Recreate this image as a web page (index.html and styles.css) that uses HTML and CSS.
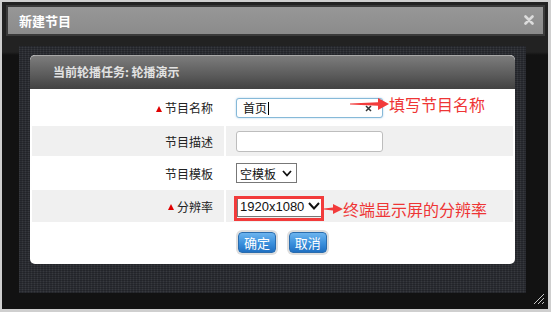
FILE: index.html
```html
<!DOCTYPE html>
<html lang="zh-CN">
<head>
    <meta charset="UTF-8">
    <title>新建节目</title>
    <link rel="stylesheet" href="styles.css">
</head>
<body>

    <div class="dialog">
        <!-- Title bar -->
        <div class="dialog-title">
            <span>新建节目</span>
            <svg class="dialog-close" width="10" height="10" viewBox="0 0 10 10">
                <path d="M1.5 1.5 L8.5 8.5 M8.5 1.5 L1.5 8.5" stroke="#dcdcdc" stroke-width="2.6" stroke-linecap="round"/>
            </svg>
        </div>

        <div class="dialog-body">
            <div class="panel">
                <div class="card">
                    <div class="card-head">当前轮播任务: 轮播演示</div>
                    <table class="form-table">
                        <tr>
                            <th><i class="req"></i>节目名称</th>
                            <td>
                                <span class="field focus">
                                    <input type="text" value="首页">
                                    <i class="caret"></i>
                                    <svg class="clear" width="7" height="7" viewBox="0 0 7 7"><path d="M1 1 L6 6 M6 1 L1 6" stroke="#333" stroke-width="1.5"/></svg>
                                </span>
                                <span class="note note-name">
                                    <svg width="39" height="14" viewBox="0 0 39 14"><polygon points="0,6.4 28,5.2 28,1 39,7 28,13 28,8.8 0,7.6" fill="#f23b3b"/></svg>
                                    填写节目名称
                                </span>
                            </td>
                        </tr>
                        <tr class="alt">
                            <th>节目描述</th>
                            <td><span class="field plain"><input type="text" value=""></span></td>
                        </tr>
                        <tr>
                            <th>节目模板</th>
                            <td>
                                <span class="select select-tpl">
                                    <span>空模板</span>
                                    <svg width="10" height="7" viewBox="0 0 10 7"><path d="M1 1 L5 5.5 L9 1" fill="none" stroke="#111" stroke-width="1.8"/></svg>
                                </span>
                            </td>
                        </tr>
                        <tr class="alt">
                            <th><i class="req"></i>分辨率</th>
                            <td>
                                <span class="select select-res">
                                    <span>1920x1080</span>
                                    <svg width="12" height="8" viewBox="0 0 12 8"><path d="M1 1 L6 6.5 L11 1" fill="none" stroke="#111" stroke-width="2"/></svg>
                                </span>
                                <span class="mark-box"></span>
                                <span class="note note-res">
                                    <svg width="19" height="14" viewBox="0 0 19 14"><polygon points="0,6.4 9,5.4 9,2 19,7 9,12 9,8.6 0,7.6" fill="#f23b3b"/></svg>
                                    终端显示屏的分辨率
                                </span>
                            </td>
                        </tr>
                        <tr>
                            <th></th>
                            <td class="actions">
                                <button class="btn">确定</button>
                                <button class="btn">取消</button>
                            </td>
                        </tr>
                    </table>
                </div>
            </div>
        </div>

        <svg class="resize" width="12" height="12" viewBox="0 0 12 12">
            <path d="M11 1 L1 11 M11 5 L5 11 M11 9 L9 11" stroke="#c8c8c8" stroke-width="1"/>
        </svg>
    </div>

</body>
</html>
```

FILE: styles.css
```css
* {
    box-sizing: border-box;
}

body {
    margin: 0;
    background: #cfcfcf;
    font-family: "Noto Sans CJK SC", "Microsoft YaHei", sans-serif;
    font-size: 12px;
    color: #222;
}

.dialog {
    position: relative;
    margin: 2px 3px 0 2px;
    height: 307px;
    padding-top: 3px;
    background: linear-gradient(#222 0, #222 50px, #121212 53px, #121212 100%);
}

.dialog-title {
    display: flex;
    justify-content: space-between;
    align-items: center;
    height: 31px;
    margin: 0 3px 0 4px;
    padding: 0 9px 1px 11px;
    border: 2px solid #3a3a3a;
    background: linear-gradient(#979797, #8b8b8b);
    color: #fff;
    font-size: 13px;
    font-weight: bold;
}

.dialog-close {
    display: block;
}

.dialog-body {
    padding: 10px 22px 0 17px;
}

.panel {
    height: 247px;
    padding: 9px 11px 0;
    background-color: #2c2e34;
    background-image:
        repeating-linear-gradient(0deg, rgba(0, 0, 0, 0.22) 0 1px, transparent 1px 2px),
        repeating-linear-gradient(90deg, rgba(255, 255, 255, 0.05) 0 1px, transparent 1px 3px);
}

.card {
    background: #fff;
    border-radius: 5px;
    overflow: hidden;
    padding-bottom: 2px;
}

.card-head {
    height: 34px;
    line-height: 32px;
    padding-left: 23px;
    border-top: 1px solid #a8a8a8;
    border-radius: 5px 5px 0 0;
    background: linear-gradient(#7c7c7c, #5a5a5a 60%, #424242);
    color: #e2e2e2;
    font-weight: bold;
}

.form-table {
    width: 100%;
    table-layout: fixed;
    border-collapse: separate;
    border-spacing: 2px;
}

.form-table th {
    width: 192px;
    padding: 0 11px 0 0;
    text-align: right;
    font-weight: normal;
    color: #222;
}

.form-table td {
    position: relative;
    padding: 0 0 0 10px;
}

.form-table tr:nth-child(1) { height: 33px; }
.form-table tr:nth-child(2) { height: 30px; }
.form-table tr:nth-child(3) { height: 30px; }
.form-table tr:nth-child(4) { height: 32px; }
.form-table tr:nth-child(5) { height: 36px; }

.form-table tr.alt th,
.form-table tr.alt td {
    background: #f0f0f0;
}

.req {
    display: inline-block;
    width: 0;
    height: 0;
    margin: 0 3px 2px 0;
    border-left: 3px solid transparent;
    border-right: 3px solid transparent;
    border-bottom: 6px solid #e00000;
    vertical-align: middle;
}

.field {
    position: relative;
    display: inline-block;
    width: 147px;
    height: 21px;
    border: 1px solid #bdbdbd;
    border-radius: 3px;
    background: #fff;
    vertical-align: middle;
}

.field.focus {
    height: 20px;
    border-color: #86b9d8;
    box-shadow: 0 0 2px rgba(110, 170, 215, 0.6);
}

.field input {
    width: 100%;
    height: 100%;
    padding: 0 6px;
    border: none;
    outline: none;
    background: transparent;
    font-family: inherit;
    font-size: 12px;
    color: #111;
}

.caret {
    position: absolute;
    left: 31px;
    top: 3px;
    width: 1px;
    height: 13px;
    background: #000;
}

.clear {
    position: absolute;
    right: 10px;
    top: 6px;
}

.select {
    display: inline-flex;
    align-items: center;
    height: 20px;
    border: 1px solid #777;
    background: #fff;
    vertical-align: middle;
    white-space: nowrap;
    color: #111;
}

.select svg {
    flex: none;
}

.select-tpl {
    padding: 0 4px 0 3px;
    gap: 6px;
}

.select-res {
    width: 86px;
    height: 21px;
    margin: 0 0 0 1px;
    padding: 0 3px 0 2px;
    gap: 4px;
    font-family: "Liberation Sans", Arial, sans-serif;
    font-size: 13px;
}

.mark-box {
    position: absolute;
    left: 8px;
    top: 6px;
    width: 90px;
    height: 25px;
    border: 3px solid #f23b3b;
}

.note {
    position: absolute;
    display: flex;
    align-items: center;
    height: 20px;
    color: #ee3535;
    font-size: 16px;
    white-space: nowrap;
}

.note-name {
    left: 124px;
    top: 3px;
}

.note-res {
    left: 98px;
    top: 9px;
}

.actions {
    padding-left: 12px !important;
}

.btn {
    width: 38px;
    height: 21px;
    margin-right: 10px;
    padding: 0;
    border: 1px solid #2a6cad;
    border-radius: 4px;
    background: linear-gradient(#6cb4ee, #3a8fdc 55%, #2070c2);
    box-shadow: 0 0 0 2px #dedede;
    color: #fff;
    font-family: inherit;
    font-size: 13px;
    line-height: 19px;
    vertical-align: middle;
}

.resize {
    position: absolute;
    right: 3px;
    bottom: 4px;
}
```
